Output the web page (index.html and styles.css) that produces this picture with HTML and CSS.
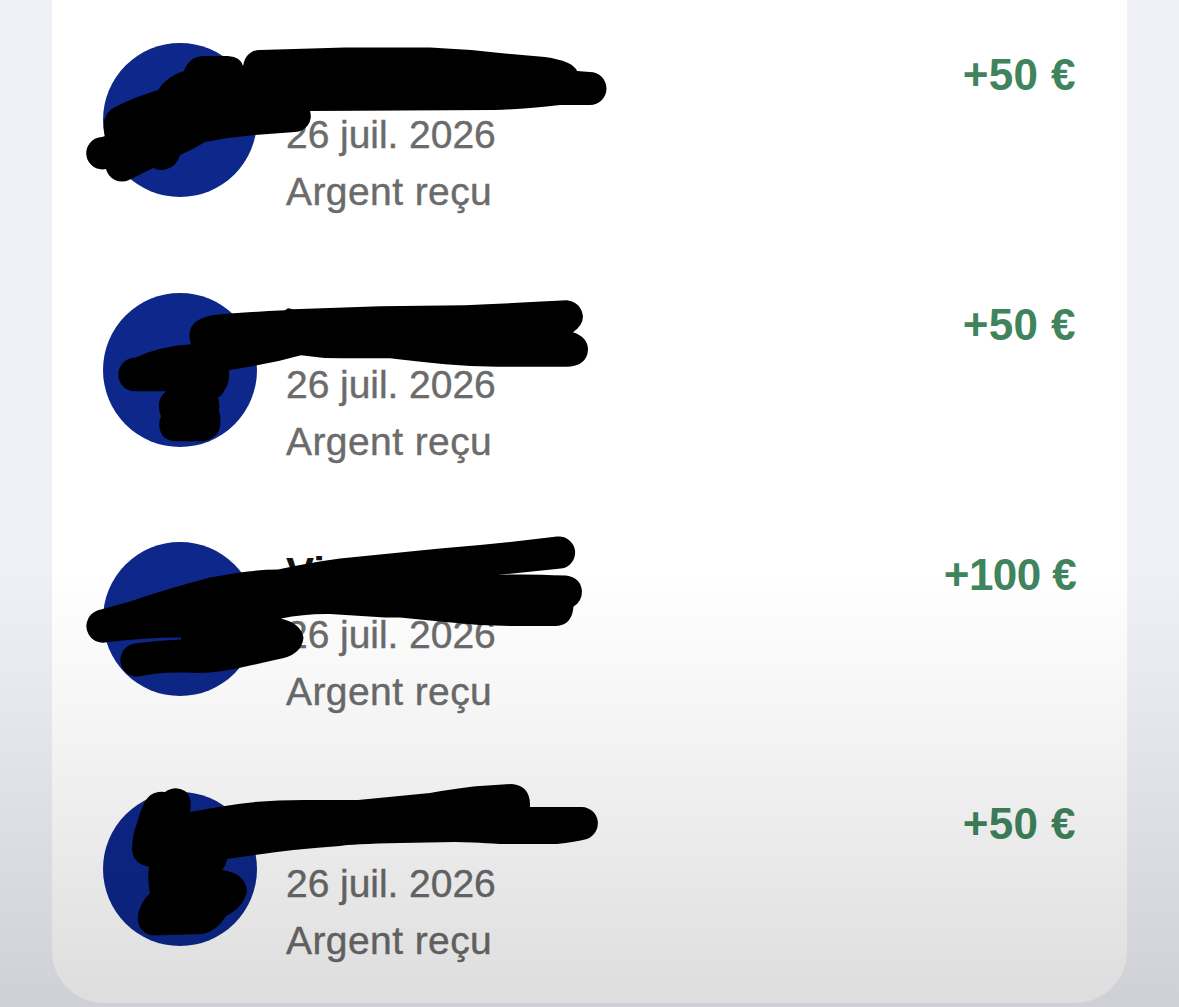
FILE: index.html
```html
<!DOCTYPE html>
<html lang="fr">
<head>
<meta charset="utf-8">
<title>Transactions</title>
<link rel="stylesheet" href="styles.css">
</head>
<body>
<main class="card">
  <article class="row">
    <div class="avatar"></div>
    <div class="details"><div class="name"></div><div class="line">26 juil. 2026</div><div class="line type">Argent reçu</div></div>
    <div class="amount">+50 €</div>
    <svg class="marker" viewBox="52 0 1075 250"><path d="M102 137A16.200 16.200 0 1 0 106 169A16.500 16.500 0 0 0 129 180L153 168Q163 173 173 166Q178 162 180 155Q192 150 205 142Q230 137 255 135L295 132A16 16 0 0 0 310 111L495 110Q525 109 560 105H590A16.500 16.500 0 0 0 590 72L577 71Q573 61 545 57L500 53Q465 49 430 47.500H345L260 50A16 16 0 0 0 244 62L243 66Q241 57 228 56H203Q189 57 184 71Q167 76 158 90Q135 97 115 107Q100 114 105 136Z"/></svg>
  </article>
  <article class="row">
    <div class="avatar"></div>
    <div class="details"><div class="name"></div><div class="line">26 juil. 2026</div><div class="line type">Argent reçu</div></div>
    <div class="amount">+50 €</div>
    <svg class="marker" viewBox="52 249.7 1075 250"><path d="M135 357.500A16.500 16.500 0 0 0 135 391H166Q155 400 161 416Q158 423 160 430Q163 440 174 441H203Q214 440 219 430Q222 421 219 410Q220 404 218 397Q222 396 225 389Q230 383 229 370L257 365Q280 361 301 355Q320 358 340 358H390Q415 361 445 364Q470 366 497 366.500H566Q587 366 588 349.500Q588 337 573 332Q583 325 583 316Q581 302 567 300Q510 303 465 305L380 306L293 309L288 308L285 310Q240 312 216 314.500Q183 319 191 344Q160 346 135 357.500Z"/></svg>
  </article>
  <article class="row">
    <div class="avatar"></div>
    <div class="details"><div class="name">Vi</div><div class="line">26 juil. 2026</div><div class="line type">Argent reçu</div></div>
    <div class="amount tight">+100 €</div>
    <svg class="marker" viewBox="52 499.4 1075 250"><path d="M101 610A16.500 16.500 0 0 0 105 643Q145 638 181 638V640Q155 641 135 644A16.500 16.500 0 1 0 139 677Q160 672 187 673Q215 675 250 666L277 660Q302 656 303.500 638Q301 624 281 619Q305 614 330 614.500L385 618H400L440 622Q475 626 510 626.500H556Q572 626 573.500 607Q582 602 582 592Q581 578 566 576Q520 574 497 575.500L561 569A16 16 0 0 0 557 537Q500 544 440 549L340 559Q310 563 278 570Q260 570 240 573L210 578Q165 590 130 602Z"/></svg>
  </article>
  <article class="row">
    <div class="avatar"></div>
    <div class="details"><div class="name"></div><div class="line">26 juil. 2026</div><div class="line type">Argent reçu</div></div>
    <div class="amount">+50 €</div>
    <svg class="marker" viewBox="52 749.1 1075 250"><path d="M143 806Q149 790 165 792Q175 785 185 791Q193 798 190 812Q206 809 225 806Q260 800 305 800H358L430 793Q465 787 480 786L512 784Q531 786 530 807H582A16.500 16.500 0 0 1 587 839Q575 842 557 844H500Q470 842 455 842L400 843Q350 844 340 846Q295 849 255 855L227 859Q226 866 222 870Q245 873 247 891Q244 907 226 916Q217 931 203 934L152 935.500Q136 932 138 914Q141 902 150 893Q147 880 149 867Q132 863 132 849Q132 836 137 823Q140 812 143 806Z"/></svg>
  </article>
</main>
<div class="shade"></div>
</body>
</html>
```
FILE: styles.css
```css
* { box-sizing: border-box; }

body {
  margin: 0;
  height: 1007px;
  overflow: hidden;
  padding: 0 52px;
  background: #eff0f6;
  font-family: "Liberation Sans", Arial, sans-serif;
}

.card {
  height: 1003px;
  border-radius: 0 0 52px 52px;
  background: #fff;
}

.row {
  position: relative;
  display: flex;
  height: 249.7px;
  padding: 43px 51px 0;
}

.avatar {
  flex: none;
  width: 154px;
  height: 154px;
  border-radius: 50%;
  background: #0d278a;
}

.details {
  flex: 1;
  padding: 6.4px 0 0 29px;
}

.name {
  height: 57px;
  line-height: 48px;
  font-size: 42px;
  font-weight: bold;
  color: #111;
}

.line {
  height: 57px;
  line-height: 57px;
  font-size: 39px;
  letter-spacing: -0.05px;
  white-space: nowrap;
  color: #6b6b6b;
  -webkit-text-stroke: 0.4px #6b6b6b;
}

.type { letter-spacing: 0.42px; }

.amount {
  padding-top: 3.4px;
  line-height: 57px;
  font-size: 44px;
  font-weight: bold;
  letter-spacing: 0.4px;
  white-space: nowrap;
  color: #40845e;
}

.tight { letter-spacing: -0.6px; }

.marker {
  position: absolute;
  left: 0;
  top: 0;
  width: 1075px;
  height: 250px;
  overflow: visible;
  fill: #000;
}

.shade {
  position: absolute;
  inset: 570px 0 0;
  background: linear-gradient(rgba(0, 0, 0, 0), rgba(0, 0, 0, 0.035) 30%, rgba(0, 0, 0, 0.135));
}
```
